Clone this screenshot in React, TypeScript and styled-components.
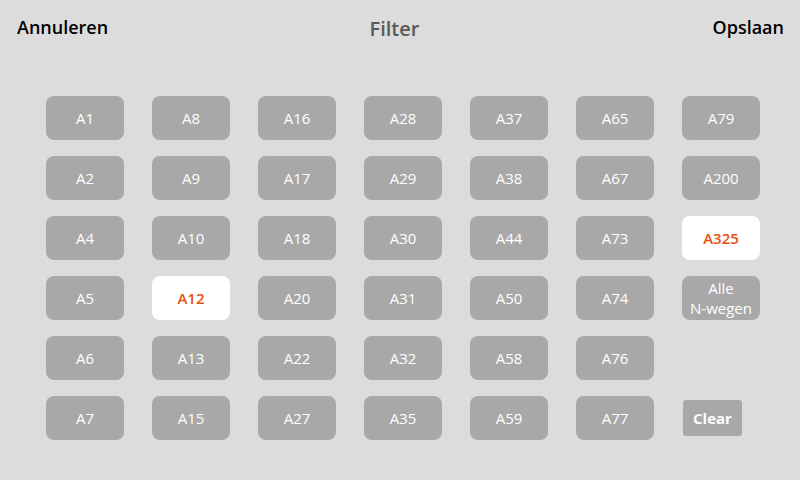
import React, { useState } from "react";
import styled, { createGlobalStyle } from "styled-components";

const GlobalStyle = createGlobalStyle`
  * { box-sizing: border-box; }
  body {
    margin: 0;
    min-height: 100vh;
    background: #dcdcdc;
    font-family: "Open Sans", sans-serif;
  }
  button { font-family: inherit; border: 0; cursor: pointer; }
`;

const Header = styled.header`
  display: grid;
  grid-template-columns: 1fr auto 1fr;
  align-items: start;
  height: 56px;
  padding: 15px 16px 0 17px;
`;

const HeaderAction = styled.button<{ $align: "start" | "end" }>`
  justify-self: ${(p) => p.$align};
  padding: 0;
  background: none;
  color: #000;
  font-size: 18px;
  font-weight: 600;
  line-height: 24px;
`;

const Title = styled.h1`
  margin: 0;
  padding-right: 12px;
  color: #5a5a5a;
  font-size: 20px;
  font-weight: 600;
  line-height: 28px;
`;

const RoadGrid = styled.main`
  display: grid;
  grid-template-columns: repeat(7, 1fr);
  grid-template-rows: repeat(6, auto);
  grid-auto-flow: column;
  gap: 16px 28px;
  padding: 40px 40px 40px 46px;
`;

const RoadButton = styled.button<{ $selected: boolean }>`
  height: 44px;
  padding: 0;
  border-radius: 8px;
  background: ${(p) => (p.$selected ? "#fff" : "#a8a8a8")};
  color: ${(p) => (p.$selected ? "#e8500f" : "#fff")};
  font-size: 15px;
  font-weight: ${(p) => (p.$selected ? 600 : 400)};
  line-height: 20px;
  white-space: pre-line;
`;

const ClearButton = styled.button`
  grid-column: 7;
  grid-row: 6;
  align-self: center;
  justify-self: start;
  height: 36px;
  margin-left: 1px;
  padding: 0 10px;
  border-radius: 3px;
  background: #a8a8a8;
  color: #fff;
  font-size: 15px;
  font-weight: 700;
  line-height: 20px;
`;

const roads = [
  "A1", "A2", "A4", "A5", "A6", "A7",
  "A8", "A9", "A10", "A12", "A13", "A15",
  "A16", "A17", "A18", "A20", "A22", "A27",
  "A28", "A29", "A30", "A31", "A32", "A35",
  "A37", "A38", "A44", "A50", "A58", "A59",
  "A65", "A67", "A73", "A74", "A76", "A77",
  "A79", "A200", "A325", "Alle\nN-wegen",
];

const initialSelection = ["A12", "A325"];

export default function App() {
  const [selected, setSelected] = useState<string[]>(initialSelection);

  const toggle = (road: string) =>
    setSelected((current) =>
      current.includes(road) ? current.filter((r) => r !== road) : [...current, road],
    );

  return (
    <>
      <GlobalStyle />
      <Header>
        <HeaderAction type="button" $align="start" onClick={() => setSelected(initialSelection)}>
          Annuleren
        </HeaderAction>
        <Title>Filter</Title>
        <HeaderAction type="button" $align="end">Opslaan</HeaderAction>
      </Header>
      <RoadGrid>
        {roads.map((road) => (
          <RoadButton
            key={road}
            type="button"
            aria-pressed={selected.includes(road)}
            $selected={selected.includes(road)}
            onClick={() => toggle(road)}
          >
            {road}
          </RoadButton>
        ))}
        <ClearButton type="button" onClick={() => setSelected([])}>Clear</ClearButton>
      </RoadGrid>
    </>
  );
}
